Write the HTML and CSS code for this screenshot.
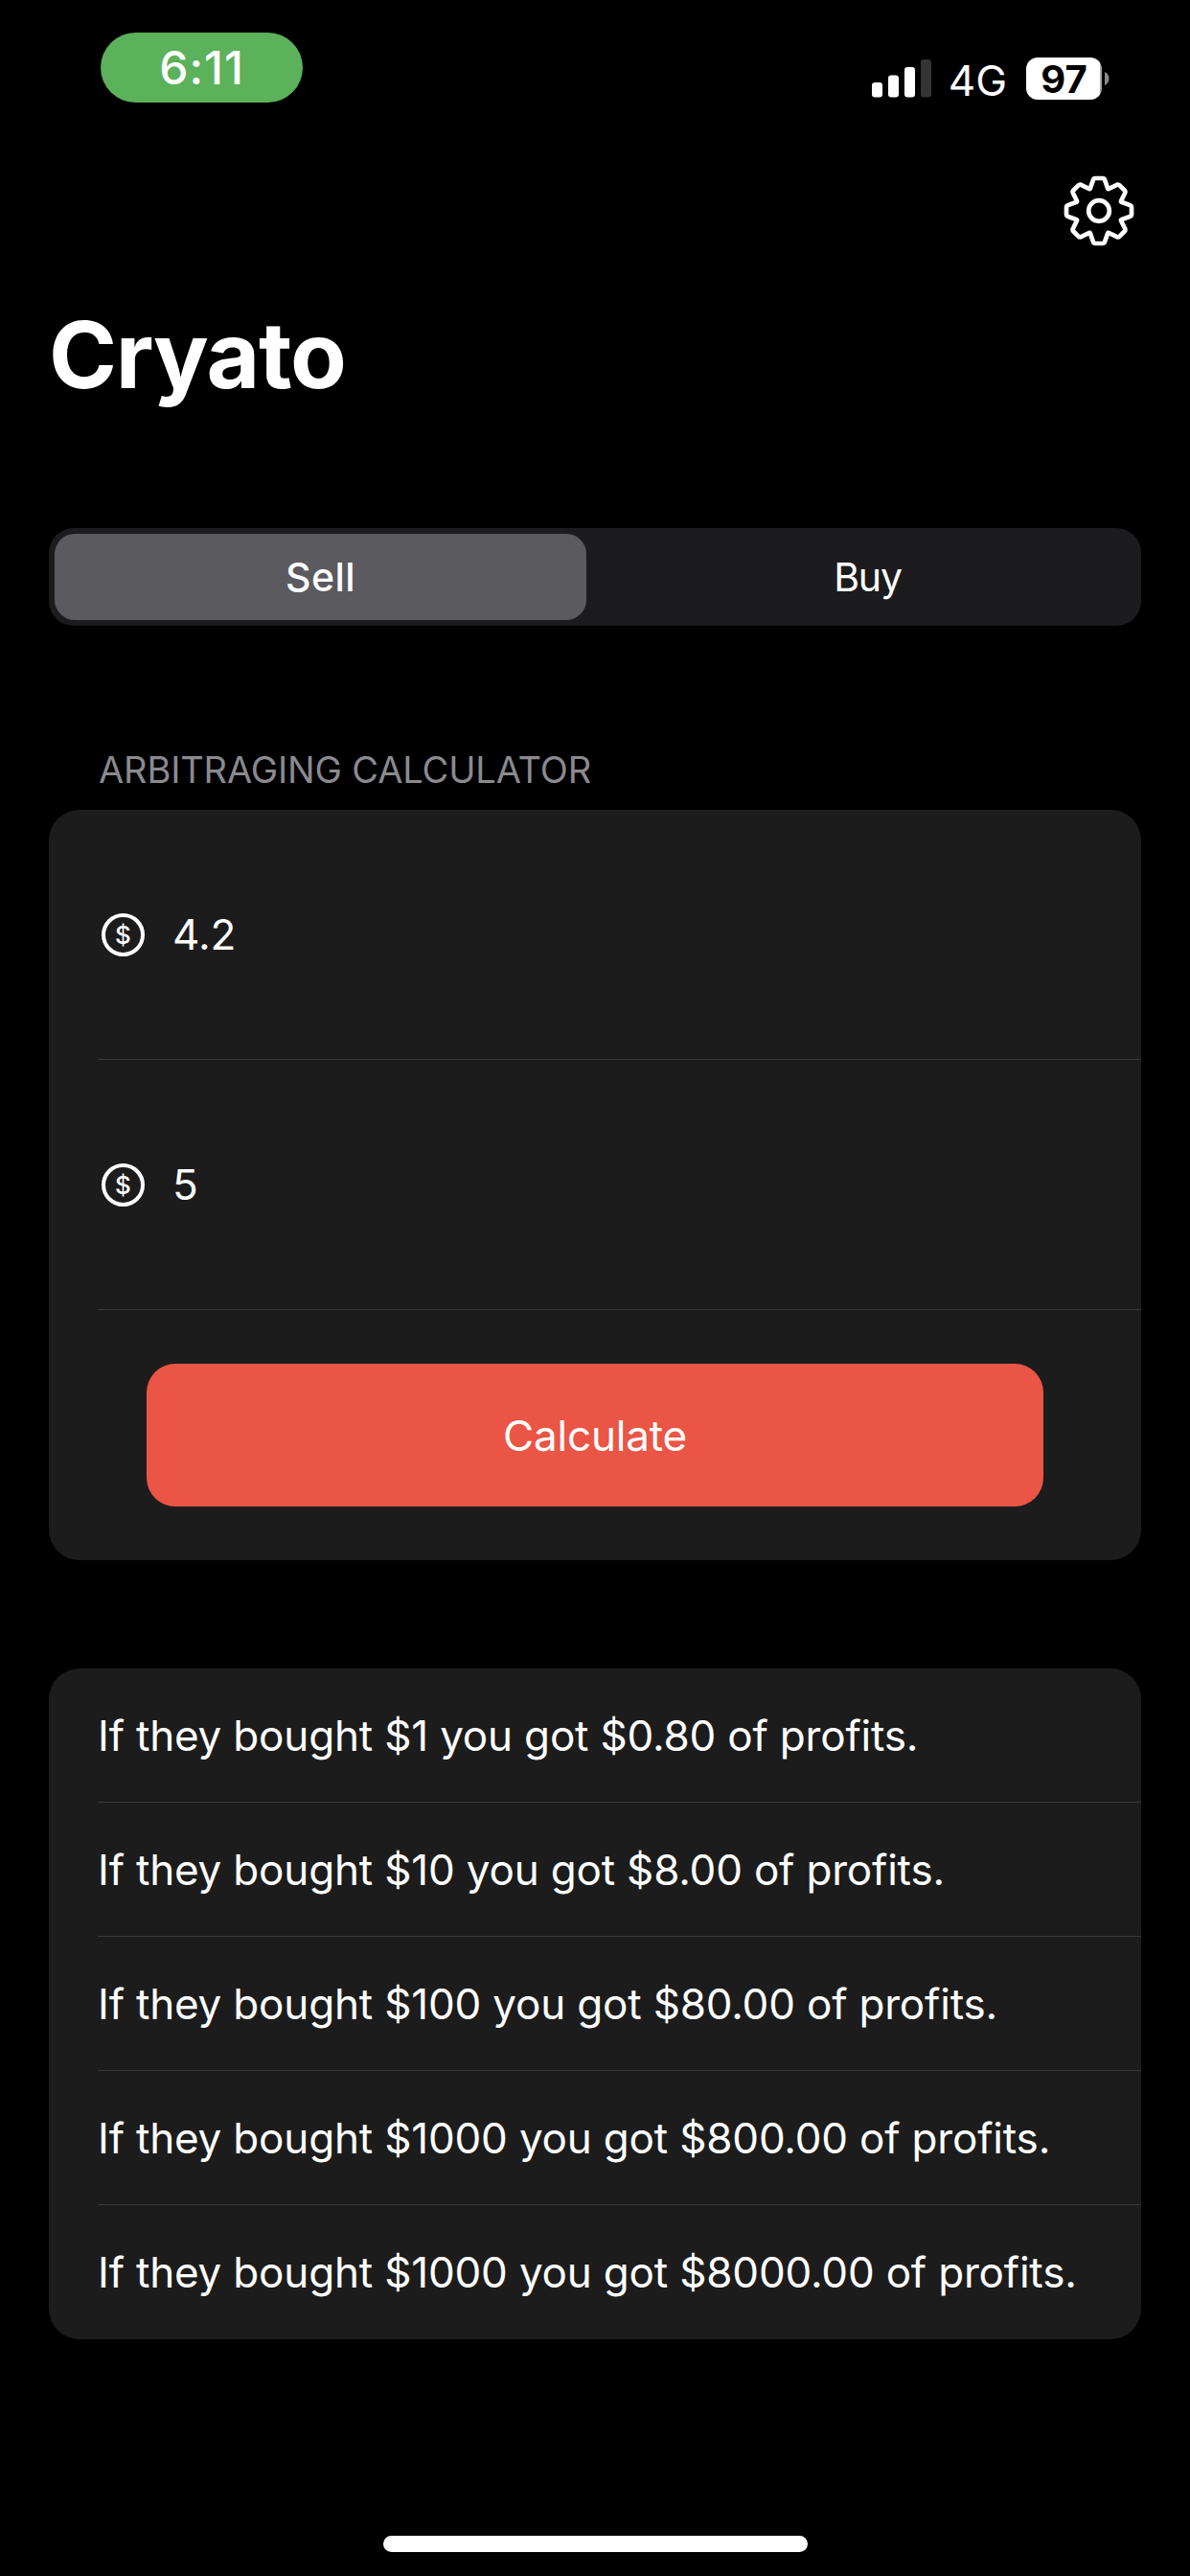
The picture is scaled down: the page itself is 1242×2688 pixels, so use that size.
FILE: index.html
```html
<!DOCTYPE html>
<html lang="en">
<head>
<meta charset="utf-8">
<title>Cryato</title>
<link rel="stylesheet" href="styles.css">
</head>
<body>
<header class="status-bar">
  <div class="time-pill">6:11</div>
  <div class="status-icons">
    <svg class="signal" width="62" height="40" viewBox="0 0 62 40">
      <rect x="0" y="24" width="11" height="15.5" rx="3.2" fill="#fff"/>
      <rect x="17" y="16.5" width="11" height="23" rx="3.2" fill="#fff"/>
      <rect x="34" y="8" width="11" height="31.5" rx="3.2" fill="#fff"/>
      <rect x="51" y="0" width="11" height="39.5" rx="3.2" fill="#343434"/>
    </svg>
    <span class="network">4G</span>
    <div class="battery">97</div>
    <svg class="battery-nub" width="5" height="14" viewBox="0 0 5 14"><path d="M0 0C3 1.500 4.500 4 4.500 7S3 12.500 0 14Z" fill="#8a8a8a"/></svg>
  </div>
</header>

<nav class="toolbar">
  <button class="icon-button" aria-label="Settings">
    <svg width="76" height="76" viewBox="-38 -38 76 76" fill="none" stroke="#fff" stroke-width="4.700" stroke-linecap="round" stroke-linejoin="round">
      <defs><path id="tooth" d="M-9.200 -23.200L-6.300 -31.500Q-5.800 -34 -3.600 -34H3.600Q5.800 -34 6.300 -31.500L9.200 -23.200"/></defs>
      <circle r="10.800"/>
      <use href="#tooth"/>
      <use href="#tooth" transform="rotate(45)"/>
      <use href="#tooth" transform="rotate(90)"/>
      <use href="#tooth" transform="rotate(135)"/>
      <use href="#tooth" transform="rotate(180)"/>
      <use href="#tooth" transform="rotate(225)"/>
      <use href="#tooth" transform="rotate(270)"/>
      <use href="#tooth" transform="rotate(315)"/>
    </svg>
  </button>
</nav>

<main class="content">
  <h1 class="title">Cryato</h1>

  <div class="segmented">
    <div class="segment segment-active">Sell</div>
    <div class="segment segment-idle">Buy</div>
  </div>

  <h2 class="section-label">ARBITRAGING CALCULATOR</h2>
  <section class="card">
    <div class="field"><span class="coin">$</span><span class="value">4.2</span></div>
    <div class="field"><span class="coin">$</span><span class="value">5</span></div>
    <div class="action"><button class="calculate">Calculate</button></div>
  </section>

  <ul class="card results">
    <li class="result">If they bought $1 you got $0.80 of profits.</li>
    <li class="result">If they bought $10 you got $8.00 of profits.</li>
    <li class="result">If they bought $100 you got $80.00 of profits.</li>
    <li class="result">If they bought $1000 you got $800.00 of profits.</li>
    <li class="result">If they bought $1000 you got $8000.00 of profits.</li>
  </ul>
</main>

<footer class="home-area"><div class="home-indicator"></div></footer>
</body>
</html>
```
FILE: styles.css
```css
* {
  box-sizing: border-box;
}

body {
  margin: 0;
  width: 1242px;
  height: 2688px;
  display: flex;
  flex-direction: column;
  overflow: hidden;
  background: #000;
  color: #fff;
  font-family: Inter, "Liberation Sans", sans-serif;
  font-size: 44px;
}

button {
  border: 0;
  padding: 0;
  background: none;
  color: inherit;
  font: inherit;
}

.status-bar {
  height: 146px;
  padding: 34px 84px 0 105px;
  display: flex;
  justify-content: space-between;
  align-items: flex-start;
}

.time-pill {
  width: 211px;
  height: 73px;
  border-radius: 37px;
  background: #5cb15b;
  font-size: 48px;
  font-weight: 500;
  letter-spacing: 1px;
  line-height: 73px;
  text-align: center;
}

.status-icons {
  height: 44px;
  margin-top: 26px;
  display: flex;
  align-items: center;
}

.network {
  margin-left: 18px;
  margin-right: 20px;
  padding-top: 4px;
  line-height: 44px;
}

.battery {
  width: 79px;
  height: 44px;
  border-radius: 12px;
  background: linear-gradient(to right, #fff 77px, #a5a5a5 77px);
  color: #000;
  font-size: 40px;
  font-weight: 700;
  line-height: 45px;
  text-align: center;
}

.battery-nub {
  margin-left: 3px;
}

.toolbar {
  height: 148px;
  padding: 36px 57px 0 0;
  display: flex;
  justify-content: flex-end;
}

.icon-button {
  width: 76px;
  height: 76px;
}

.icon-button svg {
  display: block;
}

.content {
  padding: 0 51px;
}

.title {
  margin: 16px 0 0;
  height: 120px;
  font-size: 96px;
  font-weight: 700;
  letter-spacing: -1.3px;
  line-height: 120px;
}

.segmented {
  margin-top: 121px;
  height: 102px;
  padding: 6px;
  display: flex;
  border-radius: 26px;
  background: #1c1c1e;
  font-size: 41px;
  line-height: 90px;
  text-align: center;
}

.segment {
  width: 555px;
  border-radius: 21px;
}

.segment-active {
  background: #5b5a5f;
  font-weight: 500;
  letter-spacing: 0.4px;
}

.segment-idle {
  margin-left: 16px;
  letter-spacing: -1.2px;
}

.section-label {
  margin: 126px 0 0;
  height: 66px;
  padding-left: 52px;
  color: #8a8a8f;
  font-size: 38px;
  font-weight: 400;
  letter-spacing: -0.13px;
  line-height: 48px;
}

.card {
  display: flex;
  flex-direction: column;
  border-radius: 32px;
  background: #1c1c1c;
}

.field {
  height: 261px;
  margin-left: 51px;
  padding-left: 4px;
  display: flex;
  align-items: center;
  gap: 29px;
  border-bottom: 1px solid #39393b;
}

.coin {
  width: 45px;
  height: 45px;
  border: 4px solid #fff;
  border-radius: 50%;
  font-size: 26px;
  font-weight: 500;
  line-height: 37px;
  text-align: center;
}

.action {
  height: 261px;
  display: flex;
  align-items: center;
  justify-content: center;
}

.calculate {
  width: 936px;
  height: 149px;
  border-radius: 30px;
  background: #eb5545;
  letter-spacing: -0.2px;
}

.results {
  margin: 113px 0 0;
  padding: 0;
  list-style: none;
}

.result {
  height: 140px;
  margin-left: 51px;
  border-bottom: 1px solid #39393b;
  letter-spacing: -0.18px;
  line-height: 140px;
  white-space: nowrap;
}

.result:last-child {
  border-bottom: 0;
}

.home-area {
  margin-top: auto;
  padding-bottom: 25px;
  display: flex;
  justify-content: center;
}

.home-indicator {
  width: 443px;
  height: 17px;
  border-radius: 9px;
  background: #fff;
}
```
